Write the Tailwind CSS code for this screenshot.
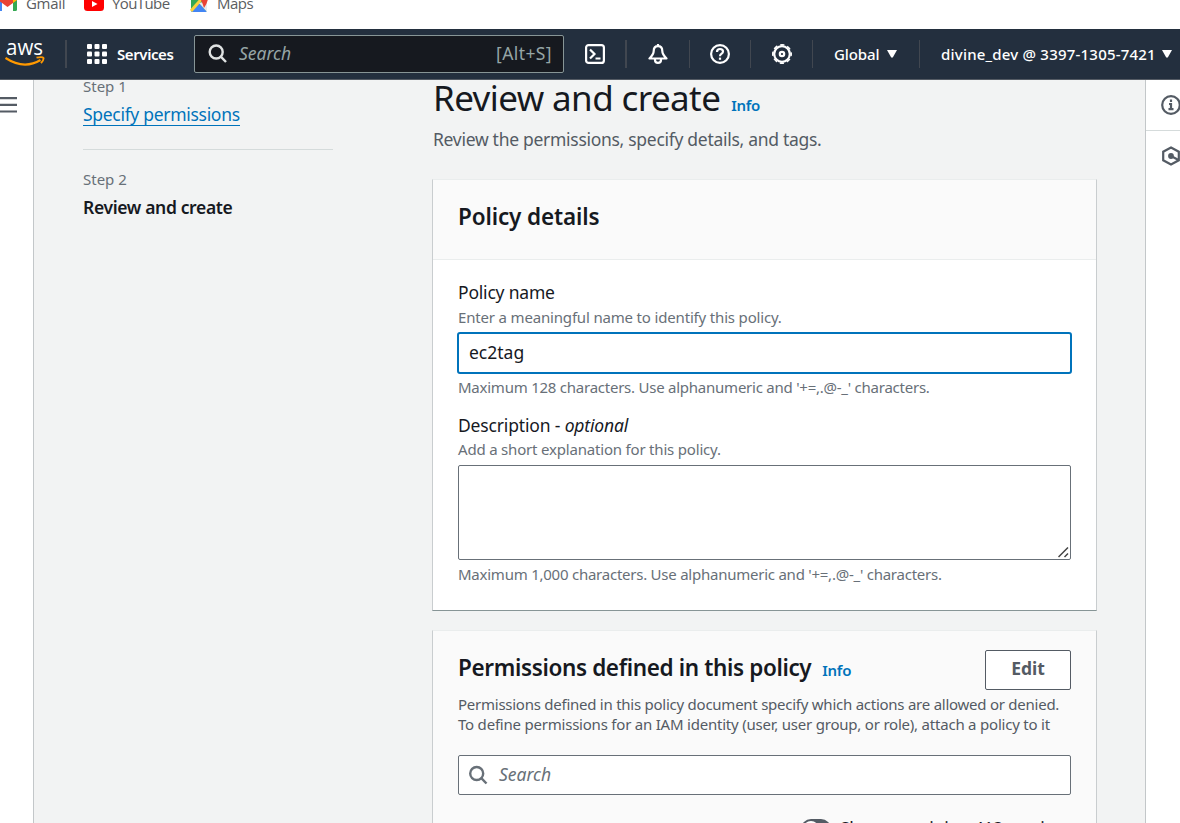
<!DOCTYPE html>
<html lang="en">
<head>
<meta charset="utf-8">
<title>Review and create | IAM</title>
<script src="https://cdn.jsdelivr.net/npm/@tailwindcss/browser@4"></script>
</head>
<body class="h-[823px] w-[1180px] overflow-hidden bg-white font-['Noto_Sans',sans-serif] text-[#16191f]">
<div class="flex h-[823px] flex-col overflow-hidden whitespace-nowrap">

  <!-- Bookmarks bar -->
  <div class="flex h-[29px] shrink-0 items-start overflow-hidden font-['Open_Sans',sans-serif] text-[15px] leading-5 text-[#5a5d61]">
    <div class="relative h-[29px] w-[84px]">
      <svg class="absolute left-[-2px] top-[-4px]" width="19" height="15" viewBox="0 0 19 15"><path d="M0 1h4v14H1.500Q0 15 0 13.500z" fill="#4285f4"/><path d="M15 1h4v12.500Q19 15 17.500 15H15z" fill="#34a853"/><path d="M0 0h19v4l-9.500 7L0 4z" fill="#ea4335"/><path d="M15 1h4v3l-4 3z" fill="#fbbc04"/></svg>
      <span class="absolute left-[26px] top-[-7px] tracking-[-0.3px]">Gmail</span>
    </div>
    <div class="relative h-[29px] w-[106px]">
      <svg class="absolute left-0 top-[-3px]" width="20" height="14" viewBox="0 0 20 14"><rect width="20" height="14" rx="3.500" fill="#f00"/><path d="M8 4l5.500 3L8 10z" fill="#fff"/></svg>
      <span class="absolute left-[28px] top-[-7px] tracking-[-0.6px]">YouTube</span>
    </div>
    <div class="relative h-[29px] w-[100px]">
      <svg class="absolute left-0 top-[-5px]" width="18" height="17" viewBox="0 0 18 17"><rect x="1" width="16" height="17" rx="2" fill="#34a853"/><path d="M1 17L9 8l8 9z" fill="#4285f4"/><path d="M1 16L15 0" stroke="#fbd13a" stroke-width="3"/><path d="M9 8l8 9V6z" fill="#e8eaed"/><path d="M10 3h8q0 4-4 10-1-4-4-10z" fill="#ea4335"/></svg>
      <span class="absolute left-[27px] top-[-7px] tracking-[-0.5px]">Maps</span>
    </div>
  </div>

  <!-- Console header -->
  <header class="flex h-[51px] shrink-0 items-center border-b border-[#545b64] bg-[#232f3e] text-[15px] font-medium leading-5 text-white">
    <svg class="ml-[5px] shrink-0" width="40" height="30" viewBox="0 0 40 30"><text x="1" y="16" font-family="Open Sans" font-weight="500" font-size="21" textLength="37" lengthAdjust="spacingAndGlyphs" fill="#fff">aws</text><path d="M0.500 19Q19 31 35.500 21" fill="none" stroke="#f90" stroke-width="2.200"/><path d="M31.500 18.700q6-1.400 7 .2 .6 1.600-2.500 5.300" fill="none" stroke="#f90" stroke-width="1.800"/></svg>
    <div class="ml-5 h-7 w-[2px] bg-[#414750]"></div>
    <svg class="ml-[20px] shrink-0" width="20" height="20" viewBox="0 0 20 20" fill="#fff"><rect width="5" height="5" rx="1"/><rect x="7.500" width="5" height="5" rx="1"/><rect x="15" width="5" height="5" rx="1"/><rect y="7.500" width="5" height="5" rx="1"/><rect x="7.500" y="7.500" width="5" height="5" rx="1"/><rect x="15" y="7.500" width="5" height="5" rx="1"/><rect y="15" width="5" height="5" rx="1"/><rect x="7.500" y="15" width="5" height="5" rx="1"/><rect x="15" y="15" width="5" height="5" rx="1"/></svg>
    <span class="ml-[10px] w-[77px] font-semibold tracking-[-0.4px]">Services</span>
    <div class="flex h-[38px] w-[370px] items-center rounded-[2px] border border-[#879596] bg-[#16191f] pl-[13px] pr-[11px] text-[17.5px] font-normal text-[#95a5a6]">
      <svg width="20" height="20" viewBox="0 0 20 20" fill="none" stroke="#e0e3e3" stroke-width="2.400"><circle cx="8.200" cy="8" r="6.500"/><path d="M12.800 12.600L18 18"/></svg>
      <span class="-mt-[2px] ml-[11px] italic">Search</span>
      <span class="-mt-[2px] ml-auto tracking-[0.4px]">[Alt+S]</span>
    </div>
    <svg class="ml-[21px] shrink-0" width="20" height="20" viewBox="0 0 20 20" fill="none" stroke="#fff" stroke-width="2.200"><rect x="1.100" y="1.100" width="17.800" height="17.800" rx="2.500"/><path d="M5 5.500L9.500 10 5 14.500M10.500 14.500H15.500"/></svg>
    <div class="ml-[20px] h-7 w-[2px] bg-[#414750]"></div>
    <svg class="ml-[21px] shrink-0" width="20" height="20" viewBox="0 0 20 20" fill="none" stroke="#fff" stroke-width="2.200" stroke-linejoin="round"><path d="M10 2.200C7 2.200 5.700 4.500 5.700 7 5.700 10 4 12 1.500 14.500h17C16 12 14.300 10 14.300 7 14.300 4.500 13 2.200 10 2.200zM10 0v2"/><path d="M7 14.500v1.500q0 2.800 3 2.800t3-2.800v-1.500"/></svg>
    <div class="ml-[21px] h-7 w-px bg-[#414750]"></div>
    <svg class="ml-[20px] shrink-0" width="20" height="20" viewBox="0 0 20 20" fill="none" stroke="#fff" stroke-width="2.200"><circle cx="10" cy="10" r="8.900"/><path d="M7 8q0-3 3-3t3 2.600q0 1.400-1.500 2.200T10 12.200"/><path d="M10 13.600v2.200"/></svg>
    <div class="ml-[20px] h-7 w-px bg-[#414750]"></div>
    <svg class="ml-[21px] shrink-0" width="20" height="20" viewBox="0 0 20 20" fill="none" stroke="#fff"><circle cx="10" cy="10" r="7.800" stroke-width="2.200"/><circle cx="10" cy="10" r="9.200" stroke-width="1.600" stroke-dasharray="4.200 3.026" stroke-dashoffset="2.100"/><circle cx="10" cy="10" r="2.200" stroke-width="2.200"/></svg>
    <div class="ml-[20px] h-7 w-px bg-[#414750]"></div>
    <span class="ml-[21px] w-[53px] tracking-[-0.1px]">Global</span>
    <svg width="10" height="8" viewBox="0 0 10 8" fill="#fff"><path d="M0 0h10L5.800 7.500H4.200z"/></svg>
    <div class="ml-[22px] h-7 w-px bg-[#414750]"></div>
    <span class="ml-[21px] w-[221px] tracking-[0.21px]">divine_dev @ 3397-1305-7421</span>
    <svg class="shrink-0" width="10" height="8" viewBox="0 0 10 8" fill="#fff"><path d="M0 0h10L5.800 7.500H4.200z"/></svg>
  </header>

  <div class="flex h-[743px] shrink-0">
    <!-- Collapsed navigation -->
    <aside class="w-[34px] shrink-0 border-r border-[#c3c7c9] bg-white">
      <svg class="mt-[17px]" width="18" height="17" viewBox="0 0 18 17" fill="#545b64"><path d="M0 0h17v2.200H0zM0 6.800h17V9H0zM0 13.400h17v2.200H0z"/></svg>
    </aside>

    <main class="flex h-full w-[1111px] shrink-0 overflow-hidden bg-[#f2f3f3]">
      <!-- Wizard steps -->
      <nav class="ml-[49px] w-[250px] shrink-0">
        <div class="-mt-[4px] text-[15px] leading-5 text-[#687078]"><span>Step 1</span></div>
        <div class="mt-[6px] text-[17.5px] leading-[25px] tracking-[-0.3px] text-[#0073bb]"><span class="inline-block h-[24px] border-b border-[#0073bb]">Specify permissions</span></div>
        <div class="mt-[22px] border-t border-[#d5dbdb]"></div>
        <div class="mt-[19px] text-[15px] leading-5 text-[#687078]"><span>Step 2</span></div>
        <div class="mt-[6px] text-[17.5px] font-semibold leading-[25px] tracking-[-0.35px]"><span>Review and create</span></div>
      </nav>

      <div class="ml-[99px] w-[665px] shrink-0">
        <div class="ml-[1px] flex items-baseline">
          <h1 class="-mt-[5px] text-[35px] leading-[45px] tracking-[-0.6px]">Review and create</h1>
          <span class="ml-[11px] text-[15px] font-semibold tracking-[-0.3px] text-[#0073bb]">Info</span>
        </div>
        <p class="ml-[1px] mt-[6px] text-[17.5px] leading-[27px] tracking-[-0.29px] text-[#545b64]"><span>Review the permissions, specify details, and tags.</span></p>

        <!-- Policy details -->
        <section class="mt-[26px] h-[432px] border border-t-[#eaeded] border-x-[#c9cdcf] border-b-[#879596] bg-white">
          <div class="h-[80px] border-b border-[#eaeded] bg-[#fafafa] pl-[25px] pt-[23px]">
            <h2 class="text-[22.5px] font-semibold leading-[28px] tracking-[-0.13px]"><span>Policy details</span></h2>
          </div>
          <div class="px-[25px] pt-[19px]">
            <div class="text-[17.5px] leading-[27px] tracking-[-0.2px]"><span>Policy name</span></div>
            <div class="text-[15px] leading-[22px] tracking-[-0.17px] text-[#687078]"><span>Enter a meaningful name to identify this policy.</span></div>
            <div class="-mx-px mt-[4px] flex h-[42px] items-center rounded-[3px] border-2 border-[#0073bb] bg-white pb-px pl-[10px] text-[17.5px]"><span>ec2tag</span></div>
            <div class="mt-[2px] text-[15px] leading-[22px] tracking-[-0.24px] text-[#687078]"><span>Maximum 128 characters. Use alphanumeric and '+=,.@-_' characters.</span></div>
            <div class="mt-[14px] text-[17.5px] leading-[27px] tracking-[-0.16px]"><span>Description - <i>optional</i></span></div>
            <div class="-mt-px text-[15px] leading-[22px] tracking-[-0.19px] text-[#687078]"><span>Add a short explanation for this policy.</span></div>
            <div class="mt-[5px] flex h-[95px] items-end justify-end rounded-[2px] border border-[#687078] p-[1px]">
              <svg width="11" height="11" viewBox="0 0 11 11" stroke="#444" stroke-width="1.500"><path d="M0.500 10L10 0.500M6.500 10L10 6.500"/></svg>
            </div>
            <div class="mt-[3px] text-[15px] leading-[22px] tracking-[-0.24px] text-[#687078]"><span>Maximum 1,000 characters. Use alphanumeric and '+=,.@-_' characters.</span></div>
          </div>
        </section>

        <!-- Permissions -->
        <section class="mt-[19px] h-[300px] border border-t-[#eaeded] border-x-[#c9cdcf] bg-[#fafafa] px-[25px] pt-[19px]">
          <div class="flex h-[40px] items-center justify-between">
            <div class="-mt-[4px] flex items-baseline"><h2 class="text-[22.5px] font-semibold leading-[28px] tracking-[-0.36px]">Permissions defined in this policy</h2><span class="ml-[11px] text-[15px] font-semibold tracking-[-0.3px] text-[#0073bb]">Info</span></div>
            <button class="h-[40px] w-[86px] rounded-[2px] border border-[#545b64] bg-white pb-[3px] text-[17.5px] font-bold text-[#545b64]">Edit</button>
          </div>
          <p class="mt-[4px] text-[15px] leading-5 text-[#545b64]"><span class="tracking-[-0.25px]">Permissions defined in this policy document specify which actions are allowed or denied.</span><br><span class="tracking-[-0.215px]">To define permissions for an IAM identity (user, user group, or role), attach a policy to it</span></p>
          <div class="mt-[21px] flex h-[40px] items-center rounded-[2px] border border-[#687078] bg-white pl-[9px] text-[17.5px] italic text-[#687078]">
            <svg width="20" height="20" viewBox="0 0 20 20" fill="none" stroke="#687078" stroke-width="2.400"><circle cx="8.700" cy="8.500" r="6.500"/><path d="M13.300 13.100L18.500 18.500"/></svg>
            <span class="-mt-[2px] ml-[11px]">Search</span>
          </div>
          <div class="ml-[343px] mt-[20px] flex items-center gap-[9px] text-[17.5px] leading-[27px] tracking-[-0.28px]">
            <div class="h-5 w-[30px] rounded-full bg-[#545b64] p-[2px]"><div class="h-4 w-4 rounded-full bg-white"></div></div>
            <span>Show remaining 413 services</span>
          </div>
        </section>
      </div>
    </main>

    <!-- Help panel rail -->
    <aside class="w-[35px] shrink-0 overflow-hidden border-l border-[#c3c7c9] bg-white">
      <div class="h-[51px] border-b border-[#d5dbdb] pl-[15px] pt-[15px]"><svg width="20" height="20" viewBox="0 0 20 20" fill="none" stroke="#545b64" stroke-width="2.200"><circle cx="10" cy="10" r="8.800"/><path d="M10 4.500v2.500M8 9h2v5M7.500 14.200h5"/></svg></div>
      <div class="pl-[15px] pt-[15px]"><svg width="20" height="20" viewBox="0 0 20 20" fill="none" stroke="#545b64" stroke-width="2.200"><path d="M10 1.500l7.800 4.200v8.600L10 18.500l-7.800-4.200V5.700z"/><path d="M10 10l7.500 4"/><circle cx="10" cy="10" r="1.800" fill="#545b64"/></svg></div>
    </aside>
  </div>
</div>
</body>
</html>
